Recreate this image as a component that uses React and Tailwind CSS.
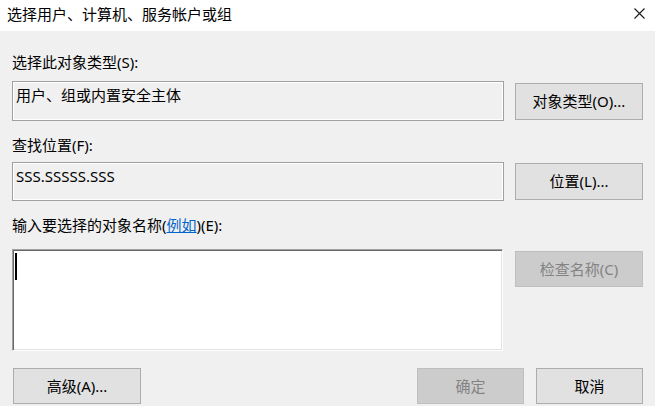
import React from 'react';

const font = { fontFamily: '"Noto Sans", "Noto Sans CJK SC", sans-serif' };

const Button = ({ children, disabled, className = '' }) => (
    <div
        className={
            'flex items-center justify-center h-[36px] text-[15px] border ' +
            (disabled
                ? 'bg-[#cccccc] border-[#bfbfbf] text-[#838383] '
                : 'bg-[#e1e1e1] border-[#adadad] text-black ') +
            className
        }
    >
        {children}
    </div>
);

const ReadonlyBox = ({ children, className = '' }) => (
    <div
        className={
            'w-[492px] bg-[#f0f0f0] border border-[#a0a0a0] shadow-[inset_1px_1px_0_#ffffff,inset_-1px_-1px_0_#ffffff] pl-[3px] pt-[3px] text-[15px] leading-[20px] text-black ' +
            className
        }
    >
        {children}
    </div>
);

const App = () => {
    return (
        <div className="w-[655px] h-[406px] bg-[#f0f0f0] flex flex-col overflow-hidden" style={font}>
            {/* title bar */}
            <div className="h-[31px] bg-white flex items-center justify-between pl-[7px] pr-[10px]">
                <span className="text-[15px] text-black leading-[20px] -mt-[3px]">选择用户、计算机、服务帐户或组</span>
                <svg width="11" height="11" viewBox="0 0 11 11" className="-mt-[5px]">
                    <path d="M0.5 0.5 L10.5 10.5 M10.5 0.5 L0.5 10.5" stroke="#1a1a1a" strokeWidth="1.1" fill="none" />
                </svg>
            </div>

            <div className="flex flex-col px-[12px]">
                <div className="mt-[21px] text-[15px] leading-[20px] text-black">选择此对象类型(S):</div>
                <div className="mt-[9px] flex items-start gap-[11px]">
                    <ReadonlyBox className="h-[40px]">用户、组或内置安全主体</ReadonlyBox>
                    <Button className="w-[128px] h-[37px] mt-[2px]">对象类型(O)...</Button>
                </div>

                <div className="mt-[14px] text-[15px] leading-[20px] text-black">查找位置(F):</div>
                <div className="mt-[7px] flex items-start gap-[11px]">
                    <ReadonlyBox className="h-[39px]">SSS.SSSSS.SSS</ReadonlyBox>
                    <Button className="w-[128px] h-[37px] mt-[1px]">位置(L)...</Button>
                </div>

                <div className="mt-[14px] text-[15px] leading-[20px] text-black">
                    输入要选择的对象名称(<span className="text-[#0066cc] underline">例如</span>)(E):
                </div>
                <div className="mt-[14px] flex items-start gap-[12px]">
                    <div className="w-[491px] h-[102px] bg-white border-t border-l border-t-[#a0a0a0] border-l-[#a0a0a0] border-r border-b border-r-white border-b-white shadow-[inset_1px_1px_0_#696969,inset_-1px_-1px_0_#e3e3e3] pl-[2px] pt-[3px]">
                        <div className="w-[2px] h-[27px] bg-black"></div>
                    </div>
                    <Button disabled className="w-[128px] mt-[2px]">检查名称(C)</Button>
                </div>

                <div className="mt-[17px] flex items-start">
                    <Button className="w-[128px] ml-[1px]">高级(A)...</Button>
                    <div className="flex-1"></div>
                    <Button disabled className="w-[107px]">确定</Button>
                    <Button className="w-[107px] ml-[12px]">取消</Button>
                </div>
            </div>
        </div>
    );
};

export default App;
